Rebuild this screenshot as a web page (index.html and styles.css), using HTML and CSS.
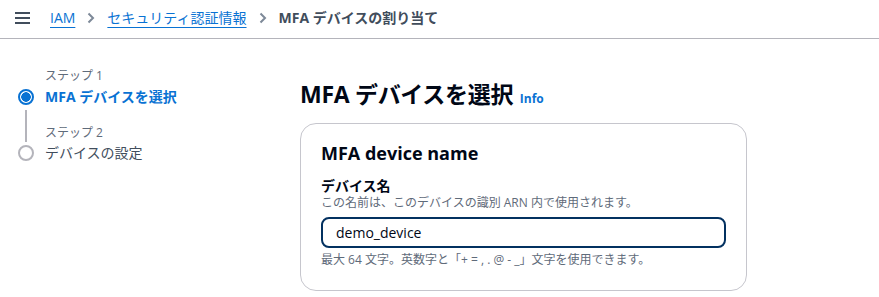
FILE: index.html
```html
<!DOCTYPE html>
<html lang="ja">
<head>
    <meta charset="UTF-8">
    <meta name="viewport" content="width=device-width, initial-scale=1.0">
    <title>MFA デバイスの割り当て</title>
    <link rel="stylesheet" href="styles.css">
</head>
<body>
    <header class="top-bar">
        <button class="menu-btn" aria-label="メニュー">
            <span></span><span></span><span></span>
        </button>
        <nav class="breadcrumbs">
            <a href="#">IAM</a>
            <span class="chevron">
                <svg width="8" height="12" viewBox="0 0 8 12"><path d="M1.5 1.5 6 6l-4.5 4.5" fill="none" stroke="currentColor" stroke-width="2"/></svg>
            </span>
            <a href="#">セキュリティ認証情報</a>
            <span class="chevron">
                <svg width="8" height="12" viewBox="0 0 8 12"><path d="M1.5 1.5 6 6l-4.5 4.5" fill="none" stroke="currentColor" stroke-width="2"/></svg>
            </span>
            <span class="current">MFA デバイスの割り当て</span>
        </nav>
    </header>

    <div class="layout">
        <!-- Wizard steps -->
        <aside class="steps">
            <span class="step-label">ステップ 1</span>
            <span class="dot active"></span>
            <span class="step-title active">MFA デバイスを選択</span>
            <span class="connector"></span>
            <span class="step-label second">ステップ 2</span>
            <span class="dot"></span>
            <span class="step-title">デバイスの設定</span>
        </aside>

        <main class="content">
            <h1 class="page-title">MFA デバイスを選択 <a href="#" class="info">Info</a></h1>

            <section class="card">
                <h2>MFA device name</h2>
                <label class="field-label" for="deviceName">デバイス名</label>
                <p class="field-desc">この名前は、このデバイスの識別 ARN 内で使用されます。</p>
                <input id="deviceName" class="text-input" type="text" value="demo_device">
                <p class="field-hint">最大 64 文字。英数字と「+ = , . @ - _」文字を使用できます。</p>
            </section>
        </main>
    </div>
</body>
</html>
```

FILE: styles.css
```css
/* Basic Reset */
* {
    margin: 0;
    padding: 0;
    box-sizing: border-box;
}

body {
    font-family: 'Open Sans', 'Noto Sans CJK JP', sans-serif;
    background: #fff;
    color: #000716;
}

a {
    color: #0972d3;
}

/* Top bar */
.top-bar {
    display: flex;
    align-items: center;
    height: 39px;
    border-bottom: 1px solid #b4b4bb;
    padding-left: 15px;
    padding-bottom: 3px;
}

.menu-btn {
    display: flex;
    flex-direction: column;
    gap: 3px;
    width: 15px;
    background: none;
    border: none;
    margin-right: 20px;
}

.menu-btn span {
    display: block;
    height: 2px;
    background: #414d5c;
}

.breadcrumbs {
    display: flex;
    align-items: center;
    font-size: 14px;
    line-height: 18px;
}

.breadcrumbs a {
    text-decoration: underline;
    text-underline-offset: 4px;
}

.chevron {
    display: flex;
    color: #7d8998;
    margin: 0 12px;
}

.current {
    font-weight: 700;
    color: #414d5c;
}

/* Page layout */
.layout {
    display: flex;
}

/* Steps */
.steps {
    width: 300px;
    padding: 29px 0 0 18px;
    display: grid;
    grid-template-columns: 16px 1fr;
    grid-template-rows: 18px 22px 34px 22px;
    column-gap: 11px;
    align-content: start;
}

.step-label {
    grid-column: 2;
    font-size: 12px;
    line-height: 16px;
    color: #5f6b7a;
}

.step-label.second {
    align-self: end;
    margin-bottom: 1px;
}

.dot {
    grid-column: 1;
    align-self: center;
    width: 16px;
    height: 16px;
    border: 2px solid #b4b4bb;
    border-radius: 50%;
}

.dot.active {
    border-color: #0972d3;
    background: radial-gradient(circle, #0972d3 0 4.5px, #fff 5px);
}

.step-title {
    grid-column: 2;
    font-size: 14px;
    line-height: 22px;
    color: #414d5c;
}

.step-title.active {
    font-weight: 700;
    color: #0972d3;
}

.connector {
    grid-column: 1;
    grid-row: 3;
    justify-self: center;
    width: 2px;
    margin: 2px 0 0;
    background: #b4b4bb;
}

/* Main content */
.content {
    padding-top: 41px;
}

.page-title {
    font-size: 23px;
    line-height: 28px;
    font-weight: 700;
    letter-spacing: -0.3px;
}

.info {
    font-size: 12px;
    font-weight: 700;
    text-decoration: none;
    margin-left: 1px;
    letter-spacing: 0;
}

.card {
    width: 447px;
    margin-top: 10px;
    border: 1px solid #c6c6cd;
    border-radius: 16px;
    padding: 17px 20px 22px;
}

.card h2 {
    font-size: 18px;
    line-height: 24px;
    font-weight: 700;
    margin-bottom: 12px;
}

.field-label {
    display: block;
    font-size: 14px;
    line-height: 18px;
    font-weight: 700;
}

.field-desc,
.field-hint {
    font-size: 12px;
    line-height: 16px;
    color: #5f6b7a;
}

.text-input {
    display: block;
    width: 100%;
    height: 31px;
    margin: 6px 0 4px;
    padding: 0 13px;
    border: 2px solid #033160;
    border-radius: 8px;
    font-family: inherit;
    font-size: 14px;
    color: #000716;
    outline: none;
}
```
